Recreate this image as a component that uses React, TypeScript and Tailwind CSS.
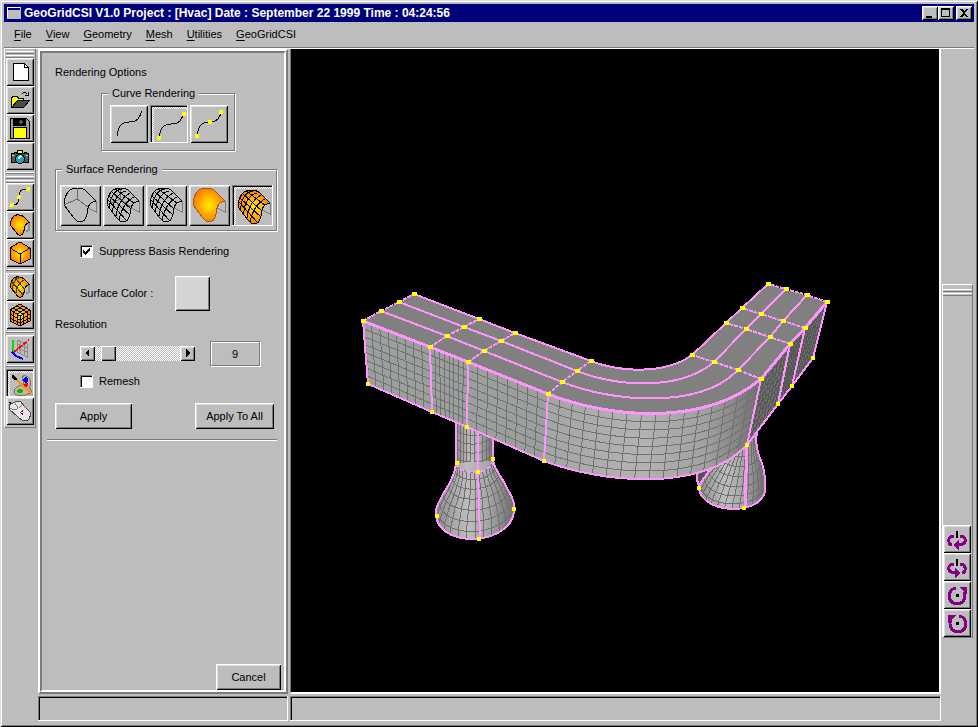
import type { ReactNode } from 'react';
import clsx from 'clsx';

type Pt = [number, number];
type Ring = [number, number, number, number, number];

const RAISED =
  'bg-[#bdbdbd] shadow-[inset_1px_1px_0_#fff,inset_-1px_-1px_0_#000,inset_2px_2px_0_#dedede,inset_-2px_-2px_0_#7b7b7b]';
const SUNKEN =
  'shadow-[inset_-1px_-1px_0_#fff,inset_1px_1px_0_#7b7b7b,inset_2px_2px_0_#000]';
const PRESSED =
  'pt-1 pl-1 pr-px pb-px bg-[repeating-conic-gradient(#fff_0_25%,#bdbdbd_0_50%)] bg-[length:2px_2px] shadow-[inset_-1px_-1px_0_#fff,inset_1px_1px_0_#7b7b7b,inset_2px_2px_0_#000]';

/* ---------- geometry helpers for the viewport ---------- */

const mix = (a: Pt, b: Pt, t: number): Pt => [a[0] + (b[0] - a[0]) * t, a[1] + (b[1] - a[1]) * t];

const line = (a: Pt, b: Pt, n = 8): Pt[] => Array.from({ length: n + 1 }, (_, i) => mix(a, b, i / n));

const bezier = (p: Pt[], n = 16): Pt[] =>
  Array.from({ length: n + 1 }, (_, i) => {
    const t = i / n;
    const s = 1 - t;
    const w = [s * s * s, 3 * s * s * t, 3 * s * t * t, t * t * t];
    return [
      p.reduce((sum, q, k) => sum + q[0] * w[k], 0),
      p.reduce((sum, q, k) => sum + q[1] * w[k], 0),
    ] as Pt;
  });

const path = (pts: Pt[]) => 'M' + pts.map((p) => `${p[0].toFixed(1)} ${p[1].toFixed(1)}`).join('L');

// wires between two edges that have the same number of samples
const wires = (top: Pt[], bottom: Pt[], rows = 8) => {
  const out: string[] = [];
  top.forEach((p, i) => out.push(path([p, bottom[i]])));
  for (let r = 1; r < rows; r++) out.push(path(top.map((p, i) => mix(p, bottom[i], r / rows))));
  return out.join('');
};

const ringPoints = ([xl, yl, xr, yr, sag]: Ring, n = 14): Pt[] =>
  Array.from({ length: n + 1 }, (_, i) => {
    const a = (Math.PI * i) / n;
    const t = (1 - Math.cos(a)) / 2;
    return [xl + (xr - xl) * t, yl + (yr - yl) * t + sag * Math.sin(a)] as Pt;
  });

const Patch = ({ top, bottom, fill, wire = '#707270' }: { top: Pt[]; bottom: Pt[]; fill: string; wire?: string }) => (
  <>
    <path d={path([...top, ...[...bottom].reverse()]) + 'Z'} fill={fill} />
    <path d={wires(top, bottom)} fill="none" stroke={wire} />
  </>
);

const Lathe = ({ rings, fill }: { rings: Ring[]; fill: string }) => {
  const rows = rings.map((r) => ringPoints(r));
  const left = rows.map((r) => r[0]);
  const right = rows.map((r) => r[r.length - 1]);
  const outline = [...left, ...rows[rows.length - 1], ...[...right].reverse()];
  return (
    <>
      <path d={path(outline) + 'Z'} fill={fill} />
      <path
        d={rows.map(path).join('') + rows[0].map((_, i) => path(rows.map((r) => r[i]))).join('')}
        fill="none"
        stroke="#707270"
      />
      <path d={path(outline)} fill="none" stroke="#ff94ff" strokeWidth="2" />
    </>
  );
};

/* ---------- duct model ---------- */

// cross sections along the duct, outer edge first
const sections: Pt[][] = [
  [[364, 321], [382, 311], [400, 302], [415, 294]],
  [[431, 347], [448, 336], [465, 327], [480, 319]],
  [[469, 362], [485, 351], [502, 341], [516, 333]],
  [[549, 394], [563, 382], [578, 371], [592, 361]],
  [[762, 379], [739, 370], [715, 362], [693, 355]],
  [[791, 344], [771, 337], [747, 329], [727, 323]],
  [[806, 328], [784, 321], [762, 314], [743, 308]],
  [[828, 302], [808, 295], [787, 289], [769, 284]],
];
const base: Pt[] = [[369, 384], [433, 412], [468, 427], [545, 461], [748, 445], [779, 404], [793, 386], [814, 358]];

const bends: Pt[][] = [
  [[549, 394], [610, 418], [705, 427], [762, 379]],
  [[563, 382], [610, 401], [700, 411], [739, 370]],
  [[578, 371], [615, 386], [680, 392], [715, 362]],
  [[592, 361], [620, 372], [666, 375], [693, 355]],
].map((p) => bezier(p as Pt[]));
const baseBend = bezier([[545, 461], [600, 482], [702, 494], [748, 445]]);

const rails = bends.map((bend, k) => [
  ...sections.slice(0, 3).map((s) => s[k]),
  ...bend,
  ...sections.slice(5).map((s) => s[k]),
]);
const baseRail = [...base.slice(0, 3), ...baseBend, ...base.slice(5)];

const neck: Ring[] = [
  [457, 418, 494, 418, 8],
  [457, 427, 494, 426, 9],
  [457, 436, 494, 434, 9],
  [457, 445, 494, 443, 9],
  [457, 454, 494, 452, 9],
  [457, 463, 494, 461, 10],
];
const bell: Ring[] = [
  [457, 463, 494, 461, 10],
  [456, 470, 496, 467, 11],
  [453, 478, 500, 474, 13],
  [449, 486, 505, 482, 15],
  [444, 494, 509, 490, 18],
  [440, 502, 513, 497, 22],
  [437, 509, 515, 504, 25],
  [437, 515, 515, 511, 26],
];
const bellRight: Ring[] = [
  [731, 430, 759, 426, 6],
  [731, 440, 757, 440, 6],
  [728, 449, 758, 448, 8],
  [722, 457, 760, 456, 10],
  [716, 464, 763, 463, 13],
  [710, 471, 765, 471, 16],
  [705, 478, 766, 478, 18],
  [701, 484, 766, 484, 20],
  [700, 488, 766, 490, 20],
];

const extraNodes: Pt[] = [[458, 463], [479, 472], [494, 459], [438, 516], [480, 539], [515, 509], [700, 488], [745, 508]];
const nodes: Pt[] = [...sections.flat(), ...base, ...extraNodes];

const Viewport = () => (
  <svg
    viewBox="292 49 648 643"
    className="block w-full h-full"
    shapeRendering="crispEdges"
    role="img"
    aria-label="Hvac duct model"
  >
    <defs>
      <linearGradient id="bend">
        <stop offset="0" stopColor="#a2a5a2" />
        <stop offset=".45" stopColor="#b3b3b3" />
        <stop offset=".75" stopColor="#a0a0a0" />
        <stop offset="1" stopColor="#707070" />
      </linearGradient>
      <linearGradient id="round">
        <stop offset="0" stopColor="#8c8c8c" />
        <stop offset=".4" stopColor="#bdbdbd" />
        <stop offset=".65" stopColor="#a8a8a8" />
        <stop offset="1" stopColor="#707070" />
      </linearGradient>
    </defs>

    {/* supports */}
    <Lathe rings={neck} fill="url(#round)" />
    <Lathe rings={bell} fill="url(#round)" />
    <path d="M479 425V472L481 539" fill="none" stroke="#ff94ff" strokeWidth="2" />
    <path d={path(ringPoints(bell[0]))} fill="none" stroke="#ff94ff" strokeWidth="2" strokeDasharray="5 2" />
    <path d="M698 468V480L701 489L711 468Z" fill="#555" stroke="#ff94ff" strokeWidth="2" />
    <Lathe rings={bellRight} fill="url(#round)" />
    <path d="M748 440L746 508" fill="none" stroke="#ff94ff" strokeWidth="3" />

    {/* duct sides */}
    {[0, 1, 2].map((i) => (
      <Patch
        key={i}
        top={line(sections[i][0], sections[i + 1][0])}
        bottom={line(base[i], base[i + 1])}
        fill="#9ca09c"
      />
    ))}
    {[4, 5, 6].map((i) => (
      <Patch
        key={i}
        top={line(sections[i][0], sections[i + 1][0])}
        bottom={line(base[i], base[i + 1])}
        fill="#707070"
        wire="#555755"
      />
    ))}
    <Patch top={bends[0]} bottom={baseBend} fill="url(#bend)" />

    {/* duct top */}
    <path d={path([...rails[0], ...[...rails[3]].reverse()]) + 'Z'} fill="#808080" />
    <g fill="none" stroke="#ff94ff" strokeWidth="2">
      {rails.map((r, i) => (
        <path key={i} d={path(r)} strokeWidth={i === 0 ? 3 : 2} />
      ))}
      <path d={path(baseRail)} />
      {sections.map((s, i) => (
        <path key={i} d={path([base[i], s[0]])} />
      ))}
    </g>
    <g fill="none" stroke="#ff94ff" strokeWidth="2" strokeDasharray="4 1">
      {sections.map((s, i) => (
        <path key={i} d={path(s)} />
      ))}
    </g>
    {nodes.map(([x, y], i) => (
      <rect key={i} x={x - 2} y={y - 2} width={i < 32 ? 5 : 4} height="4" fill="#ff0" />
    ))}
  </svg>
);

/* ---------- icons ---------- */

const Icon = ({ size = 28, children }: { size?: number; children: ReactNode }) => (
  <svg
    viewBox={`0 0 ${size} ${size}`}
    width={size}
    height={size}
    shapeRendering="crispEdges"
    fill="none"
    stroke="#000"
    className="block shrink-0"
  >
    <defs>
      <radialGradient id="flame">
        <stop offset="0" stopColor="#ffef00" />
        <stop offset="1" stopColor="#ff7b00" />
      </radialGradient>
    </defs>
    {children}
  </svg>
);

const SKIN = 'M4 20C4 12 8 3 16 3C20 3 24 4 26 6L36 16C31 17 29 19 28 23C27 30 26 37 20 37C17 37 16 35 14 33Z';
const SKIN_GRID =
  'M5 15L23 35M6 11L27 30M9 7L28 24M12 4L31 18M7 23C6 14 11 5 19 4M10 27C9 18 15 8 23 6M13 31C14 22 18 13 27 8M16 35C18 27 21 17 31 12';

const Skin = ({ filled, grid, back }: { filled?: boolean; grid?: boolean; back?: boolean }) => (
  <>
    <path d="M36 16V27L28 23" stroke="#7b7b7b" />
    <path d={SKIN} fill={filled ? 'url(#flame)' : 'none'} stroke={filled && !grid ? '#a55a10' : '#000'} />
    {back && <path d="M17 3V14L4 20M17 14L28 22" stroke="#6b6b6b" />}
    {grid && <path d={SKIN_GRID} />}
  </>
);

const CurveIcon = ({ knots }: { knots: Pt[] }) => (
  <Icon size={38}>
    <path d="M7 31C8 22 11 17 19 17C27 17 29 14 32 6" />
    {knots.map(([x, y]) => (
      <rect key={x} x={x} y={y} width="4" height="4" fill="#ff0" stroke="none" />
    ))}
  </Icon>
);

const NewIcon = () => (
  <Icon>
    <path d="M7.500 5.500H18.500L22.500 9.500V22.500H7.500Z" fill="#fff" />
    <path d="M18.500 5.500V9.500H22.500" />
  </Icon>
);
const OpenIcon = () => (
  <Icon>
    <path d="M5.500 21.500V11.500L7.500 10.500H11.500L12.500 12.500H17.500V15.500H11.500Z" fill="#ff0" />
    <path d="M5.500 21.500L11.500 14.500H23.500L17.500 21.500Z" fill="#4a4a4a" />
    <path d="M15.500 8.500L17.500 6.500H19.500L21.500 8.500M18.500 9.500H22.500V6" />
  </Icon>
);
const SaveIcon = () => (
  <Icon>
    <path d="M4.500 4.500H20.500L23.500 7.500V24.500H4.500Z" fill="#9c9c9c" />
    <path d="M7 5H19V11H7Z" fill="#000" />
    <path d="M15 6V10M17 8H13" stroke="#555" strokeWidth="2" />
    <path d="M7.500 13.500H20.500V24.500H7.500Z" fill="#ff0" />
  </Icon>
);
const CameraIcon = () => (
  <Icon>
    <path d="M5.500 11.500H8V10H10V11.500H18V10H20V11.500H22.500V20.500H5.500Z" fill="#5a5a5a" />
    <path d="M11.500 8.500H16.500V11.500H11.500Z" fill="#ff0" />
    <path d="M6 13H8M20 13H22" stroke="#ddd" />
    <circle cx="14" cy="17" r="4.500" fill="#18a5b5" />
    <path d="M12 17L15 14" stroke="#bff" strokeWidth="2" />
  </Icon>
);
const SplineIcon = () => (
  <Icon>
    <path d="M6 22C12 22 13 19 13 14C13 9 14 6 22 6" />
    <g fill="#ff0" stroke="none">
      <circle cx="6" cy="22" r="2" />
      <circle cx="13" cy="14" r="2" />
      <circle cx="22" cy="6" r="2" />
    </g>
  </Icon>
);
const PatchIcon = ({ grid }: { grid?: boolean }) => (
  <Icon>
    <g transform="translate(2 2) scale(.6)" strokeWidth="1.700">
      <path d="M35 17V28L30 31" stroke="#8c8c8c" strokeWidth="3" />
      <path d={SKIN} fill="url(#flame)" />
      {grid && <path d="M6 11L25 33M12 5L28 24M8 24C7 14 12 6 20 4M13 31C14 20 18 13 27 8" stroke="#4a4218" strokeWidth="2" />}
    </g>
  </Icon>
);
const CubeIcon = ({ grid }: { grid?: boolean }) => (
  <Icon>
    <path d="M4 9L14 3L24 9V20L14 25L4 20Z" fill="url(#flame)" />
    <path d="M4 9L14 15L24 9M14 15V25" />
    {grid && <path d="M7 7L17 13V24M11 5L21 11V22M21 7L11 13V24M17 5L7 11V22M4 13L14 19L24 13M4 17L14 22L24 17" />}
  </Icon>
);
const AxesIcon = () => (
  <Icon>
    <path d="M11 5L21 9V22L11 17ZM14 6V19M18 8V21M11 9L21 13M11 13L21 17" stroke="#8c8c8c" />
    <path d="M7 5V17" stroke="#00e000" strokeWidth="2" />
    <path d="M8 17L23 5" stroke="#f00" strokeDasharray="5 1" strokeWidth="2" />
    <path d="M6 17L10 21L17 24" stroke="#00f" strokeWidth="2" />
  </Icon>
);
const PaletteIcon = () => (
  <Icon>
    <path
      d="M14 7C14 4 19 4 21 7C23 10 23 14 21 17C24 18 24 21 22 22C17 26 9 25 7 23C5 20 7 16 11 15C14 14 16 15 16 13C16 11 14 10 14 7Z"
      fill="#c6b58c"
      stroke="#737373"
    />
    <path d="M18 5L20 8V10L18 12L15 10V8Z" fill="#00f" stroke="none" />
    <circle cx="18" cy="14" r="2" fill="#f00" stroke="none" />
    <ellipse cx="12" cy="20" rx="3" ry="2" fill="#00b800" stroke="none" />
    <path d="M7 7L25 24" stroke="#ff8c18" strokeWidth="2" />
    <path d="M4 5L7 7L8 9" strokeWidth="3" />
  </Icon>
);
const MouseIcon = () => (
  <Icon>
    <path d="M3 5L6 7L8 5L12 9" strokeWidth="1" />
    <path d="M3 8L9 5L14 4L19 10L24 15C25 18 24 23 20 24C17 24 14 22 12 20L3 12Z" fill="#e6e6e6" stroke="#4a4a4a" />
    <path d="M4 11C8 14 13 12 17 7M9 6L12 11" stroke="#7b7b7b" />
    <path d="M13 16L17 12V15Z" fill="#f00" stroke="none" />
    <path d="M14 16H17V18Z" fill="#00f" stroke="none" />
  </Icon>
);

const OrbitIcon = ({ flip }: { flip?: boolean }) => (
  <Icon>
    <g stroke="#840084" strokeWidth="3" transform={flip ? 'matrix(-1 0 0 1 28 0)' : undefined}>
      <path d="M11 11C7 11 5 14 6 17C6 19 8 20 9 20M15 20C21 20 23 17 22 14C21 12 20 11 17 11" />
      <path d="M16 15V25L10 20Z" fill="#840084" stroke="none" />
    </g>
    <path d="M14 6V13" strokeWidth="2" />
  </Icon>
);
const SpinIcon = ({ flip }: { flip?: boolean }) => (
  <Icon>
    <g stroke="#840084" strokeWidth="3" transform={flip ? 'matrix(-1 0 0 1 29 0)' : undefined}>
      <path d="M13 7A8 8 0 1 0 21 11" />
      <path d="M16 6H24V14Z" fill="#840084" stroke="none" />
    </g>
    <rect x="13" y="13" width="3" height="3" fill="#000" stroke="none" />
  </Icon>
);

/* ---------- controls ---------- */

interface ToolButtonProps {
  label: string;
  pressed?: boolean;
  className?: string;
  children: ReactNode;
}

const ToolButton = ({ label, pressed, className = 'w-7 h-7', children }: ToolButtonProps) => (
  <button
    type="button"
    aria-label={label}
    aria-pressed={pressed}
    className={clsx('flex items-center justify-center shrink-0 overflow-hidden', className, pressed ? PRESSED : RAISED)}
  >
    {pressed ? (
      <span className="w-full h-full flex items-center justify-center overflow-hidden bg-[#bdbdbd]">{children}</span>
    ) : (
      children
    )}
  </button>
);

const PushButton = ({ className, children }: { className: string; children: ReactNode }) => (
  <button type="button" className={clsx('h-[26px]', RAISED, className)}>
    {children}
  </button>
);

const Grip = () => (
  <div className="h-[7px] flex flex-col gap-px shrink-0">
    <div className="h-[3px] border-t border-b border-t-white border-b-[#7b7b7b]"></div>
    <div className="h-[3px] border-t border-b border-t-white border-b-[#7b7b7b]"></div>
  </div>
);

const Rule = () => <div className="h-0.5 my-0.5 border-t border-b border-t-white border-b-[#7b7b7b] shrink-0"></div>;

const Group = ({ title, className, children }: { title: string; className: string; children: ReactNode }) => (
  <fieldset className={clsx('border border-[#7b7b7b] shadow-[1px_1px_0_#fff,inset_1px_1px_0_#fff]', className)}>
    <legend className="ml-1.5 px-1 bg-[#bdbdbd] leading-4">{title}</legend>
    {children}
  </fieldset>
);

const CheckBox = ({ label, checked }: { label: string; checked?: boolean }) => (
  <label className="flex items-center gap-1.5 h-4">
    <span className="relative w-[13px] h-[13px] block">
      <input
        type="checkbox"
        defaultChecked={checked}
        className={clsx('peer appearance-none block w-[13px] h-[13px] bg-white', SUNKEN)}
      />
      <svg
        viewBox="0 0 13 13"
        className="absolute inset-0 hidden peer-checked:block pointer-events-none"
        shapeRendering="crispEdges"
      >
        <path d="M3 5v3l2 2l5 -5v-3l-5 5z" />
      </svg>
    </span>
    {label}
  </label>
);

const ArrowButton = ({ label, d }: { label: string; d: string }) => (
  <button type="button" aria-label={label} className={clsx('w-[15px] h-[15px]', RAISED)}>
    <svg viewBox="0 0 15 15" width="15" height="15" shapeRendering="crispEdges">
      <path d={d} />
    </svg>
  </button>
);

const TitleBar = () => (
  <header className="h-[18px] bg-[#00007b] text-white font-bold flex items-center pl-0.5 pr-0.5 shrink-0">
    <svg viewBox="0 0 16 14" width="16" height="14" shapeRendering="crispEdges">
      <path d="M1 1h14v12H1z" fill="#bdbdbd" />
      <path d="M2 2h12v2H2z" fill="#00007b" />
      <path d="M1 1h13M1.500 1v11" stroke="#fff" />
    </svg>
    <h1 className="ml-0.5 text-[12px] leading-[18px] whitespace-nowrap">
      GeoGridCSI V1.0 Project : [Hvac] Date : September 22 1999 Time : 04:24:56
    </h1>
    <div className="ml-auto flex">
      {[
        ['Minimize', 'M4 10h6v2H4z'],
        ['Maximize', 'M3 2h9v9H3zM4 4v6h7V4z'],
        ['Close', 'M4 3h2l2 2l2 -2h2l-3 4l3 4h-2l-2 -2l-2 2H4l3 -4z'],
      ].map(([label, d]) => (
        <button key={label} type="button" aria-label={label} className={clsx('w-4 h-3.5 last:ml-0.5', RAISED)}>
          <svg viewBox="0 0 16 14" width="16" height="14" shapeRendering="crispEdges">
            <path d={d} fillRule="evenodd" />
          </svg>
        </button>
      ))}
    </div>
  </header>
);

const MenuBar = () => (
  <nav className="h-[26px] flex items-center gap-3.5 pl-2.5 border-b border-[#7b7b7b] shadow-[0_1px_0_#fff] shrink-0">
    {['File', 'View', 'Geometry', 'Mesh', 'Utilities', 'GeoGridCSI'].map((item) => (
      <button key={item} type="button">
        <span className="underline underline-offset-2">{item[0]}</span>
        {item.slice(1)}
      </button>
    ))}
  </nav>
);

const ToolBar = () => (
  <aside className="w-8 self-start shrink-0 flex flex-col px-px py-0.5 border-l border-r border-b border-l-white border-r-[#7b7b7b] border-b-[#7b7b7b]">
    <Grip />
    <ToolButton label="New"><NewIcon /></ToolButton>
    <ToolButton label="Open"><OpenIcon /></ToolButton>
    <ToolButton label="Save"><SaveIcon /></ToolButton>
    <ToolButton label="Snapshot"><CameraIcon /></ToolButton>
    <Rule />
    <Grip />
    <ToolButton label="Curves"><SplineIcon /></ToolButton>
    <ToolButton label="Surfaces"><PatchIcon /></ToolButton>
    <ToolButton label="Solids"><CubeIcon /></ToolButton>
    <Rule />
    <ToolButton label="Surface mesh"><PatchIcon grid /></ToolButton>
    <ToolButton label="Volume mesh"><CubeIcon grid /></ToolButton>
    <Rule />
    <ToolButton label="Axes"><AxesIcon /></ToolButton>
    <Rule />
    <ToolButton label="Rendering" pressed><PaletteIcon /></ToolButton>
    <ToolButton label="Mouse"><MouseIcon /></ToolButton>
  </aside>
);

const RenderingPanel = () => (
  <section className="w-[250px] shrink-0 border-2 border-t-white border-l-white border-b-[#7b7b7b] border-r-[#7b7b7b] flex">
    <div className="flex-1 flex flex-col border-2 border-t-[#7b7b7b] border-l-[#7b7b7b] border-b-white border-r-white pl-[13px] pr-[7px] pt-[11px]">
      <h2 className="leading-4">Rendering Options</h2>
      <Group title="Curve Rendering" className="ml-[46px] mt-[5px] w-[134px] h-[66px]">
        <div className="flex gap-0.5 pl-2 mt-1">
          <ToolButton label="Curve only" className="w-[38px] h-[38px]">
            <CurveIcon knots={[]} />
          </ToolButton>
          <ToolButton label="Curve with end points" pressed className="w-[38px] h-[38px]">
            <CurveIcon knots={[[5, 29], [30, 5]]} />
          </ToolButton>
          <ToolButton label="Curve with all points" className="w-[38px] h-[38px]">
            <CurveIcon knots={[[5, 29], [18, 15], [29, 5]]} />
          </ToolButton>
        </div>
      </Group>
      <Group title="Surface Rendering" className="mt-2.5 w-[222px] h-[70px]">
        <div className="flex gap-0.5 pl-1 mt-2">
          <ToolButton label="Boundary" className="w-[41px] h-[41px]"><Icon size={41}><Skin back /></Icon></ToolButton>
          <ToolButton label="Wireframe" className="w-[41px] h-[41px]"><Icon size={41}><Skin grid back /></Icon></ToolButton>
          <ToolButton label="Hidden line" className="w-[41px] h-[41px]"><Icon size={41}><Skin grid /></Icon></ToolButton>
          <ToolButton label="Shaded" className="w-[41px] h-[41px]"><Icon size={41}><Skin filled /></Icon></ToolButton>
          <ToolButton label="Shaded with grid" pressed className="w-[41px] h-[41px]"><Icon size={41}><Skin filled grid /></Icon></ToolButton>
        </div>
      </Group>
      <div className="ml-[25px] mt-3">
        <CheckBox label="Suppress Basis Rendering" checked />
      </div>
      <div className="ml-[25px] mt-[17px] flex items-center">
        <span id="surface-color" className="w-[95px]">Surface Color :</span>
        <button
          type="button"
          aria-labelledby="surface-color"
          className="w-[35px] h-[35px] bg-[#d4d4d4] shadow-[inset_1px_1px_0_#fff,inset_-1px_-1px_0_#000,inset_2px_2px_0_#dedede,inset_-2px_-2px_0_#7b7b7b]"
        ></button>
      </div>
      <label htmlFor="resolution" className="mt-[5px] leading-4">Resolution</label>
      <div className="ml-[25px] mt-[9px] flex items-center">
        <ArrowButton label="Decrease" d="M9 3v8l-4 -4z" />
        <input
          id="resolution"
          type="range"
          min="0"
          max="100"
          defaultValue="9"
          className="appearance-none w-[85px] h-[15px] bg-[repeating-conic-gradient(#fff_0_25%,#bdbdbd_0_50%)] bg-[length:2px_2px] [&::-webkit-slider-thumb]:appearance-none [&::-webkit-slider-thumb]:w-[15px] [&::-webkit-slider-thumb]:h-[15px] [&::-webkit-slider-thumb]:bg-[#bdbdbd] [&::-webkit-slider-thumb]:shadow-[inset_1px_1px_0_#fff,inset_-1px_-1px_0_#000,inset_-2px_-2px_0_#7b7b7b]"
        />
        <ArrowButton label="Increase" d="M6 3v8l4 -4z" />
        <input
          aria-label="Resolution value"
          defaultValue="9"
          className="ml-[15px] w-[50px] h-[25px] text-center border border-[#7b7b7b] shadow-[inset_1px_1px_0_#fff,1px_1px_0_#fff]"
        />
      </div>
      <div className="ml-[25px] mt-[7px]">
        <CheckBox label="Remesh" />
      </div>
      <div className="mt-3.5 mr-[3px] flex justify-between">
        <PushButton className="w-[77px]">Apply</PushButton>
        <PushButton className="w-[79px]">Apply To All</PushButton>
      </div>
      <hr className="mt-2.5 -ml-2 h-0.5 border-t border-b border-t-[#7b7b7b] border-b-white" />
      <PushButton className="w-[65px] mt-auto -mr-1 self-end">Cancel</PushButton>
    </div>
  </section>
);

const ViewBar = () => (
  <aside className="ml-px mt-[235px] mb-[56px] w-[31px] shrink-0 flex flex-col border border-t-white border-l-white border-b-[#7b7b7b] border-r-[#7b7b7b] pt-1">
    <Grip />
    <div className="mt-auto flex flex-col">
      <ToolButton label="Orbit left"><OrbitIcon /></ToolButton>
      <ToolButton label="Orbit right"><OrbitIcon flip /></ToolButton>
      <ToolButton label="Spin counterclockwise"><SpinIcon /></ToolButton>
      <ToolButton label="Spin clockwise"><SpinIcon flip /></ToolButton>
    </div>
  </aside>
);

export default function App() {
  return (
    <div className="h-screen flex flex-col bg-[#bdbdbd] p-1 text-black text-[11px] font-['Liberation_Sans',Arial,sans-serif] shadow-[inset_1px_1px_0_#dedede,inset_-1px_-1px_0_#000,inset_2px_2px_0_#fff,inset_-2px_-2px_0_#7b7b7b]">
      <TitleBar />
      <MenuBar />
      <div className="flex-1 min-h-0 flex pt-px pr-px">
        <ToolBar />
        <div className="flex-1 min-w-0 flex gap-0.5 ml-0.5">
          <RenderingPanel />
          <main className="flex-1 min-w-0 bg-black border-l border-r-2 border-b-2 border-l-[#7b7b7b] border-r-white border-b-white">
            <Viewport />
          </main>
        </div>
        <ViewBar />
      </div>
      <footer className="mt-0.5 mb-0.5 ml-[34px] mr-[33px] h-[25px] shrink-0 flex gap-0.5">
        <div className={clsx('w-[250px] shrink-0', SUNKEN)}></div>
        <div className={clsx('flex-1', SUNKEN)}></div>
      </footer>
    </div>
  );
}
